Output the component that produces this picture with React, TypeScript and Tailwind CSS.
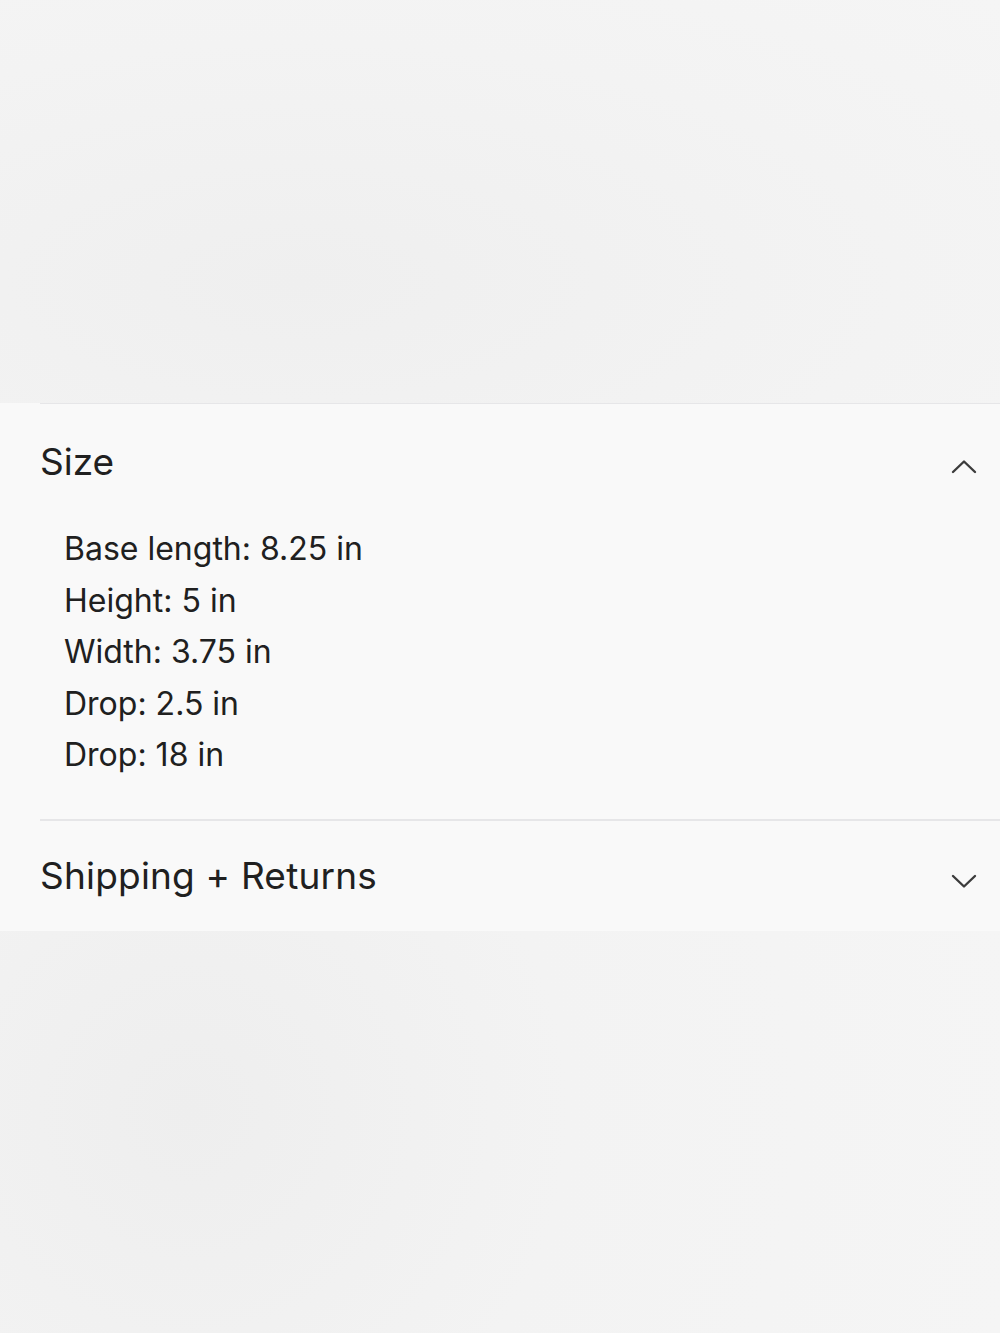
const sizes = [
  "Base length: 8.25 in",
  "Height: 5 in",
  "Width: 3.75 in",
  "Drop: 2.5 in",
  "Drop: 18 in",
];

function Chevron({ up }: { up?: boolean }) {
  return (
    <svg width="26" height="15" viewBox="0 0 26 15" fill="none" className="text-[#3c3c3c]">
      <polyline
        points={up ? "2,13 13,2.5 24,13" : "2,2 13,12.5 24,2"}
        stroke="currentColor"
        strokeWidth="2.4"
        strokeLinecap="round"
        strokeLinejoin="round"
      />
    </svg>
  );
}

export default function App() {
  return (
    <div
      className="w-[1000px] h-[1333px] overflow-hidden flex flex-col text-[#202020] bg-[#f4f4f4]"
      style={{ fontFamily: "Inter, 'Noto Sans', sans-serif" }}
    >
      {/* product image area, blank */}
      <div className="h-[403px] shrink-0 bg-[radial-gradient(ellipse_at_30%_70%,#efefef,#f3f3f3_60%,#f5f5f5)]" />

      <div className="bg-[#f9f9f9] flex flex-col pl-10">
        <div className="border-t border-[#e6e6e8]">
          <div className="flex items-center justify-between h-[116px] pr-[23px]">
            <h3 className="text-[37px]">Size</h3>
            <div className="mt-[8px]">
              <Chevron up />
            </div>
          </div>
          <ul className="pl-6 pb-[38px] mt-[3px] text-[32px] leading-[51.5px]">
            {sizes.map((s, i) => (
              <li key={i}>{s}</li>
            ))}
          </ul>
        </div>
        <div className="border-t-2 border-[#e6e6e8]">
          <div className="flex items-center justify-between h-[110px] pr-[23px]">
            <h3 className="text-[37px] tracking-[0.2px]">Shipping + Returns</h3>
            <div className="mt-[12px]">
              <Chevron />
            </div>
          </div>
        </div>
      </div>

      <div className="flex-1 bg-[radial-gradient(circle_at_19%_45%,#eeeeee,#f3f3f3_45%,#f5f5f5)]" />
    </div>
  );
}
